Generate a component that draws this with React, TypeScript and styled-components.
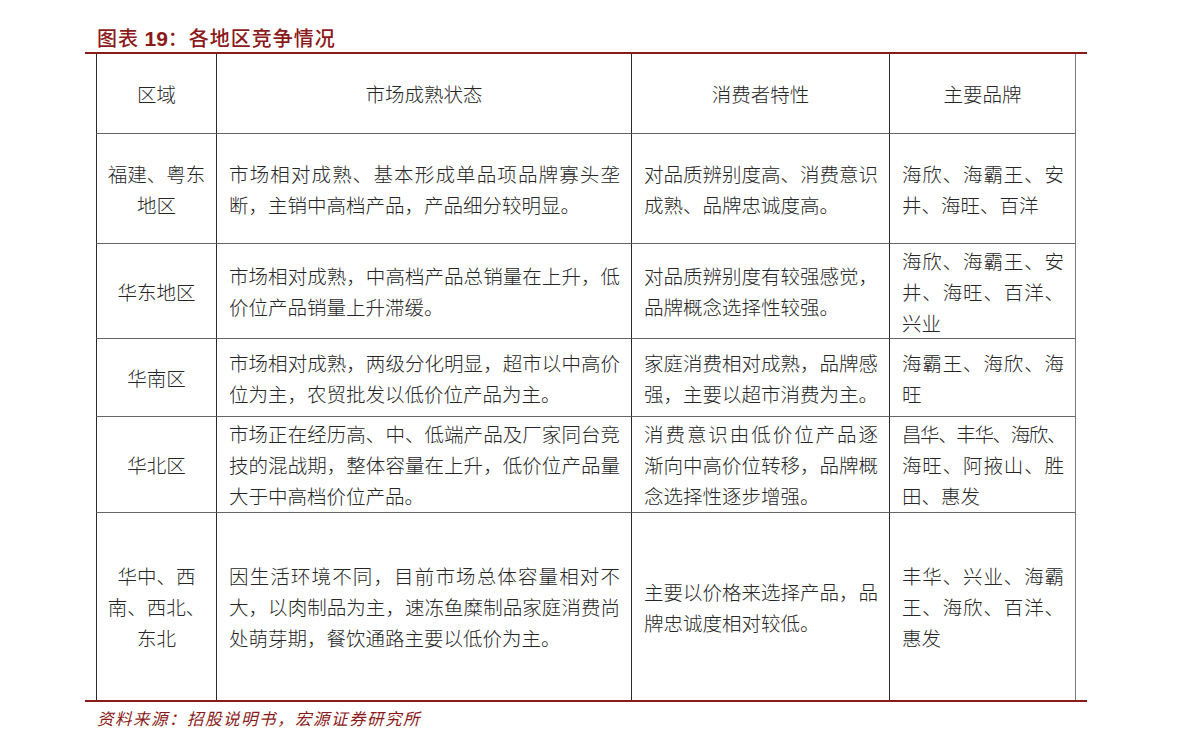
import React from 'react'
import styled, { createGlobalStyle } from 'styled-components'

const GlobalStyle = createGlobalStyle`
  html, body {
    margin: 0;
    padding: 0;
    background: #ffffff;
  }
  body {
    font-family: 'Noto Sans CJK SC', 'Liberation Sans', sans-serif;
    color: #222222;
  }
`

const RED = '#8b1a1a'
const FONT_SIZE = 19.5

const Frame = styled.div`
  margin-left: 85px;
  width: 1002px;
`

const Title = styled.div`
  padding: 24px 0 0 12px;
  height: 28px;
  line-height: 28px;
  font-size: 20px;
  letter-spacing: 1px;
  color: ${RED};
  font-weight: 500;
  border-bottom: 2px solid ${RED};
  white-space: nowrap;
`

const TitleNum = styled.span`
  font-family: 'Liberation Sans', Arial, sans-serif;
  font-weight: 700;
  font-size: 21px;
  letter-spacing: 0;
`

const Table = styled.div`
  box-sizing: border-box;
  width: 100%;
  padding: 0 11px;
  display: grid;
  grid-template-columns: 120px 415px 258px 187px;
  border-bottom: 2px solid ${RED};
`

const Cell = styled.div<{ $h: number; $last: boolean; $right: boolean; $center: boolean }>`
  box-sizing: border-box;
  height: ${p => p.$h}px;
  border-left: 1px solid #2b2b2b;
  border-right: ${p => (p.$right ? '1px solid #7a7a7a' : 'none')};
  border-bottom: ${p => (p.$last ? 'none' : '1px solid #666666')};
  padding: ${p => (p.$center ? '0 6px' : '0 11px 0 12px')};
  display: flex;
  flex-direction: column;
  justify-content: center;
  font-size: ${FONT_SIZE}px;
  line-height: 31px;
  font-weight: 300;
  color: #262626;
`

const Line = styled.div<{ $mode: 'justify' | 'start' | 'center' }>`
  white-space: nowrap;
  text-align: ${p => p.$mode};
  text-align-last: ${p => p.$mode};
`

const Source = styled.div`
  padding: 4px 0 0 12px;
  line-height: 24px;
  font-size: 16.5px;
  letter-spacing: 1.5px;
  font-style: italic;
  color: ${RED};
  white-space: nowrap;
`

// inner text width of each column (cell width minus border and padding)
const INNER = [107, 391, 234, 163]

const header = ['区域', '市场成熟状态', '消费者特性', '主要品牌']

const rows: { h: number; cells: string[][] }[] = [
  {
    h: 110,
    cells: [
      ['福建、粤东', '地区'],
      ['市场相对成熟、基本形成单品项品牌寡头垄', '断，主销中高档产品，产品细分较明显。'],
      ['对品质辨别度高、消费意识', '成熟、品牌忠诚度高。'],
      ['海欣、海霸王、安', '井、海旺、百洋']
    ]
  },
  {
    h: 95,
    cells: [
      ['华东地区'],
      ['市场相对成熟，中高档产品总销量在上升，低', '价位产品销量上升滞缓。'],
      ['对品质辨别度有较强感觉，', '品牌概念选择性较强。'],
      ['海欣、海霸王、安', '井、海旺、百洋、', '兴业']
    ]
  },
  {
    h: 78,
    cells: [
      ['华南区'],
      ['市场相对成熟，两级分化明显，超市以中高价', '位为主，农贸批发以低价位产品为主。'],
      ['家庭消费相对成熟，品牌感', '强，主要以超市消费为主。'],
      ['海霸王、海欣、海', '旺']
    ]
  },
  {
    h: 96,
    cells: [
      ['华北区'],
      [
        '市场正在经历高、中、低端产品及厂家同台竞',
        '技的混战期，整体容量在上升，低价位产品量',
        '大于中高档价位产品。'
      ],
      ['消费意识由低价位产品逐', '渐向中高价位转移，品牌概', '念选择性逐步增强。'],
      ['昌华、丰华、海欣、', '海旺、阿掖山、胜', '田、惠发']
    ]
  },
  {
    h: 187,
    cells: [
      ['华中、西', '南、西北、', '东北'],
      [
        '因生活环境不同，目前市场总体容量相对不',
        '大，以肉制品为主，速冻鱼糜制品家庭消费尚',
        '处萌芽期，餐饮通路主要以低价为主。'
      ],
      ['主要以价格来选择产品，品', '牌忠诚度相对较低。'],
      ['丰华、兴业、海霸', '王、海欣、百洋、', '惠发']
    ]
  }
]

// squeeze a line that would overflow its column (Word compresses punctuation)
const squeeze = (text: string, col: number) => {
  const natural = text.length * FONT_SIZE
  if (natural <= INNER[col]) return undefined
  return { letterSpacing: `${(INNER[col] - natural) / text.length}px` }
}

const App: React.FC = () => {
  return (
    <>
      <GlobalStyle />
      <Frame>
        <Title>
          图表 <TitleNum>19</TitleNum>：各地区竞争情况
        </Title>
        <Table>
          {header.map((h, i) => (
            <Cell key={h} $h={80} $last={false} $right={i === 3} $center>
              <Line $mode='center'>{h}</Line>
            </Cell>
          ))}
          {rows.map((row, r) =>
            row.cells.map((lines, c) => (
              <Cell
                key={`${r}-${c}`}
                $h={row.h}
                $last={r === rows.length - 1}
                $right={c === 3}
                $center={c === 0}
              >
                {lines.map((line, i) => (
                  <Line
                    key={i}
                    $mode={c === 0 ? 'center' : i < lines.length - 1 ? 'justify' : 'start'}
                    style={squeeze(line, c)}
                  >
                    {line}
                  </Line>
                ))}
              </Cell>
            ))
          )}
        </Table>
        <Source>资料来源：招股说明书，宏源证券研究所</Source>
      </Frame>
    </>
  )
}

export default App
